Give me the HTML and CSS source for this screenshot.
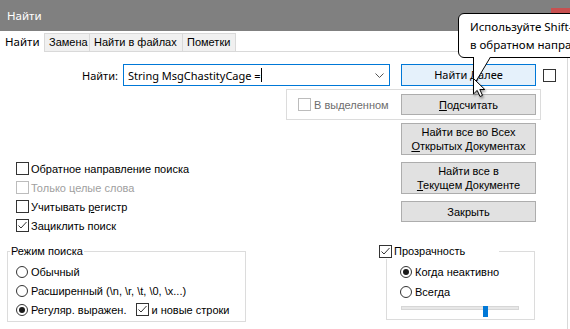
FILE: index.html
```html
<!DOCTYPE html>
<html lang="ru">
  <head>
    <meta charset="UTF-8" />
    <title>Найти</title>
    <link rel="stylesheet" href="styles.css">
  </head>
  <body>
    <div class="window">
      <div class="titlebar">
        <span class="title">Найти</span>
        <span class="close"></span>
      </div>
      <div class="tabs">
        <div class="tab active">Найти</div>
        <div class="tab tab-replace">Замена</div>
        <div class="tab tab-files">Найти в файлах</div>
        <div class="tab tab-marks">Пометки</div>
        <div class="tab-fill"></div>
      </div>
      <div class="panel">
        <div class="find-row">
          <span class="find-label">Найти:</span>
          <div class="combo">
            <span class="combo-text">String MsgChastityCage =</span><span class="caret"></span>
            <svg class="chevron" width="9" height="5" viewBox="0 0 9 5"><polyline points="0.5,0.5 4.5,4.5 8.5,0.5" /></svg>
          </div>
          <button class="btn btn-default">Найти Далее</button>
          <span class="check"></span>
        </div>
        <div class="selection-box">
          <span class="opt disabled"><span class="check"></span><span>В выделенном</span></span>
          <button class="btn btn-count"><u>П</u>одсчитать</button>
        </div>
        <div class="main">
          <div class="left-col">
            <div class="options">
              <span class="opt"><span class="check"></span><span>Обратное направление поиска</span></span>
              <span class="opt disabled light"><span class="check"></span><span>Только целые слова</span></span>
              <span class="opt"><span class="check"></span><span>Учитывать <u>р</u>егистр</span></span>
              <span class="opt"><span class="check checked"><svg width="11" height="11" viewBox="0 0 11 11"><polyline points="1.5,5.5 4,8 9.5,2" /></svg></span><span>Зациклить поиск</span></span>
            </div>
            <div class="group mode">
              <div class="group-title">Режим поиска</div>
              <div class="radios">
                <span class="opt"><span class="radio"></span><span>Обычный</span></span>
                <span class="opt"><span class="radio"></span><span>Расширенный (\n, \r, \t, \0, \x...)</span></span>
                <span class="opt">
                  <span class="radio on"></span><span>Регуляр. выражен.</span>
                  <span class="check checked newlines"><svg width="11" height="11" viewBox="0 0 11 11"><polyline points="1.5,5.5 4,8 9.5,2" /></svg></span><span>и новые строки</span>
                </span>
              </div>
            </div>
          </div>
          <div class="right-col">
            <button class="btn btn-tall">Найти все во Всех<br><u>О</u>ткрытых Документах</button>
            <button class="btn btn-tall">Найти все в<br><u>Т</u>екущем Документе</button>
            <button class="btn">Закрыть</button>
            <div class="group transp">
              <div class="group-title transp-title">
                <span class="check checked"><svg width="11" height="11" viewBox="0 0 11 11"><polyline points="1.5,5.5 4,8 9.5,2" /></svg></span><span>Прозрачность</span>
              </div>
              <div class="radios">
                <span class="opt"><span class="radio on"></span><span>Когда неактивно</span></span>
                <span class="opt"><span class="radio"></span><span>Всегда</span></span>
              </div>
              <div class="slider"><span class="track"></span><span class="thumb"></span></div>
            </div>
          </div>
        </div>
      </div>

      <div class="tooltip">
        <div>Используйте Shift-</div>
        <div>в обратном напра</div>
      </div>
      <svg class="tooltip-tail" width="20" height="32" viewBox="0 0 20 32">
        <polygon points="1,0 1,29 18,0" fill="#fff" />
        <polyline points="0.5,1 0.5,29.5 17.5,1" fill="none" stroke="#000" />
      </svg>
      <svg class="cursor" width="18" height="24" viewBox="0 0 18 24">
        <path d="M1.5,1.5 L1.5,17 L5.2,13.4 L8,19.5 L10.5,18.4 L7.8,12.5 L12.8,12.5 Z" />
      </svg>
    </div>
  </body>
</html>
```

FILE: styles.css
```css
* {
  box-sizing: border-box;
}
body {
  margin: 0;
  width: 570px;
  height: 329px;
  overflow: hidden;
  background: #fff;
  font-family: 'Liberation Sans', sans-serif;
  font-size: 11px;
  color: #000;
}
.window {
  position: relative;
  height: 329px;
}
.titlebar {
  display: flex;
  align-items: center;
  height: 31px;
  padding-left: 7px;
  background: #808080;
  color: #fff;
  font-family: 'Noto Sans', sans-serif;
  font-size: 11.5px;
}
.title {
  flex: 1;
}
.close {
  align-self: flex-start;
  margin-top: 8px;
  width: 19px;
  height: 23px;
  background: #c75050;
}
.tabs {
  display: flex;
  height: 21px;
}
.tab {
  height: 19px;
  margin-top: 2px;
  padding-left: 4px;
  border: 1px solid #d9d9d9;
  border-left: none;
  background: #f0f0f0;
  line-height: 17px;
  white-space: nowrap;
}
.tab.active {
  width: 44px;
  height: 21px;
  margin-top: 0;
  padding-left: 5px;
  border: none;
  background: #fff;
  font-family: 'Noto Sans', sans-serif;
  font-size: 11.5px;
  line-height: 21px;
}
.tab-replace {
  width: 46px;
  border-left: 1px solid #d9d9d9;
}
.tab-files {
  width: 93px;
}
.tab-marks {
  width: 53px;
}
.tab-fill {
  flex: 1;
  margin-right: 2px;
  border-bottom: 1px solid #d9d9d9;
}
.panel {
  width: 568px;
  height: 277px;
  padding-top: 12px;
  border-right: 1px solid #d9d9d9;
}
.find-row {
  display: flex;
  align-items: center;
  height: 22px;
}
.find-label {
  width: 118px;
  margin-right: 5px;
  text-align: right;
  font-family: 'Noto Sans', sans-serif;
  font-size: 11px;
}
.combo {
  display: flex;
  align-items: center;
  width: 267px;
  height: 22px;
  padding-left: 4px;
  border: 1px solid #0078d7;
  font-family: 'Noto Sans', sans-serif;
  font-size: 11px;
}
.caret {
  width: 1px;
  height: 14px;
  background: #000;
}
.chevron {
  margin-left: auto;
  margin-right: 5px;
  fill: none;
  stroke: #555;
}
.btn {
  display: block;
  width: 135px;
  height: 21px;
  padding: 0;
  border: 1px solid #adadad;
  background: #e1e1e1;
  color: #000;
  font: inherit;
  font-weight: 400;
  line-height: 14px;
  text-align: center;
}
.btn-default {
  height: 22px;
  margin-left: 11px;
  border-color: #0078d7;
  background: #e5f1fb;
  font-family: 'Noto Sans', sans-serif;
  font-size: 11px;
}
.find-row > .check {
  margin-left: 7px;
}
.check {
  display: inline-flex;
  align-items: center;
  justify-content: center;
  flex: none;
  width: 13px;
  height: 13px;
  margin-right: 2px;
  border: 1px solid #333;
  background: #fff;
}
.check svg {
  fill: none;
  stroke: #333;
  stroke-width: 1;
}
.radio {
  display: inline-flex;
  align-items: center;
  justify-content: center;
  flex: none;
  width: 12px;
  height: 12px;
  margin-right: 3px;
  border: 1px solid #333;
  border-radius: 50%;
}
.radio.on::after {
  content: '';
  width: 6px;
  height: 6px;
  border-radius: 50%;
  background: #1a1a1a;
}
.opt {
  display: flex;
  align-items: center;
  height: 19px;
  white-space: pre;
}
.opt.disabled {
  color: #6d6d6d;
}
.opt.disabled .check {
  border-color: #bcbcbc;
}
.opt.light {
  color: #a0a0a0;
}
.selection-box {
  display: flex;
  align-items: center;
  width: 255px;
  height: 31px;
  margin: 3px 0 0 286px;
  padding-left: 11px;
  border: 1px solid #dcdcdc;
}
.selection-box .check {
  margin-right: 3px;
}
.btn-count {
  margin-left: auto;
  margin-right: 4px;
}
.main {
  display: grid;
  grid-template-columns: 379px 161px;
}
.left-col {
  padding-top: 39px;
}
.options .opt {
  padding-left: 16px;
}
.group {
  border: 1px solid #dcdcdc;
}
.group-title {
  width: fit-content;
  margin-top: -8px;
  height: 15px;
  line-height: 15px;
  background: #fff;
  padding: 0 1px;
}
.mode {
  width: 239px;
  height: 71px;
  margin: 16px 0 0 7px;
  padding-left: 8px;
}
.mode .group-title {
  margin-left: -6px;
}
.mode .radios {
  padding-top: 3px;
}
.mode .newlines {
  margin-left: 10px;
}
.right-col {
  padding-top: 3px;
}
.right-col .btn {
  margin: 0 0 7px 22px;
}
.btn-tall {
  height: 32px;
}
.transp {
  width: 149px;
  height: 69px;
  margin: 29px 0 0 7px;
  padding-left: 13px;
}
.transp-title {
  display: flex;
  align-items: center;
  margin-left: -22px;
  padding-right: 34px;
}
.transp .radios {
  padding-top: 3px;
}
.transp .opt {
  height: 20px;
}
.slider {
  position: relative;
  width: 118px;
  height: 10px;
  margin-left: 1px;
}
.track {
  display: block;
  width: 118px;
  height: 4px;
  margin-top: 4px;
  border: 1px solid #d6d6d6;
  background: #e7e7e7;
}
.thumb {
  position: absolute;
  left: 82px;
  top: 0;
  width: 5px;
  height: 11px;
  background: #0078d7;
}
.tooltip {
  position: absolute;
  left: 458px;
  top: 13px;
  width: 200px;
  height: 45px;
  padding: 4px 0 0 11px;
  border: 1px solid #000;
  border-radius: 6px;
  background: #fff;
  font-family: 'Noto Sans', sans-serif;
  font-size: 11.5px;
  line-height: 18px;
  white-space: nowrap;
}
.tooltip-tail {
  position: absolute;
  left: 473px;
  top: 56px;
}
.cursor {
  position: absolute;
  left: 472px;
  top: 77px;
  fill: #fff;
  stroke: #000;
  stroke-width: 1;
  filter: drop-shadow(1px 2px 1px rgba(0, 0, 0, 0.35));
}
```
